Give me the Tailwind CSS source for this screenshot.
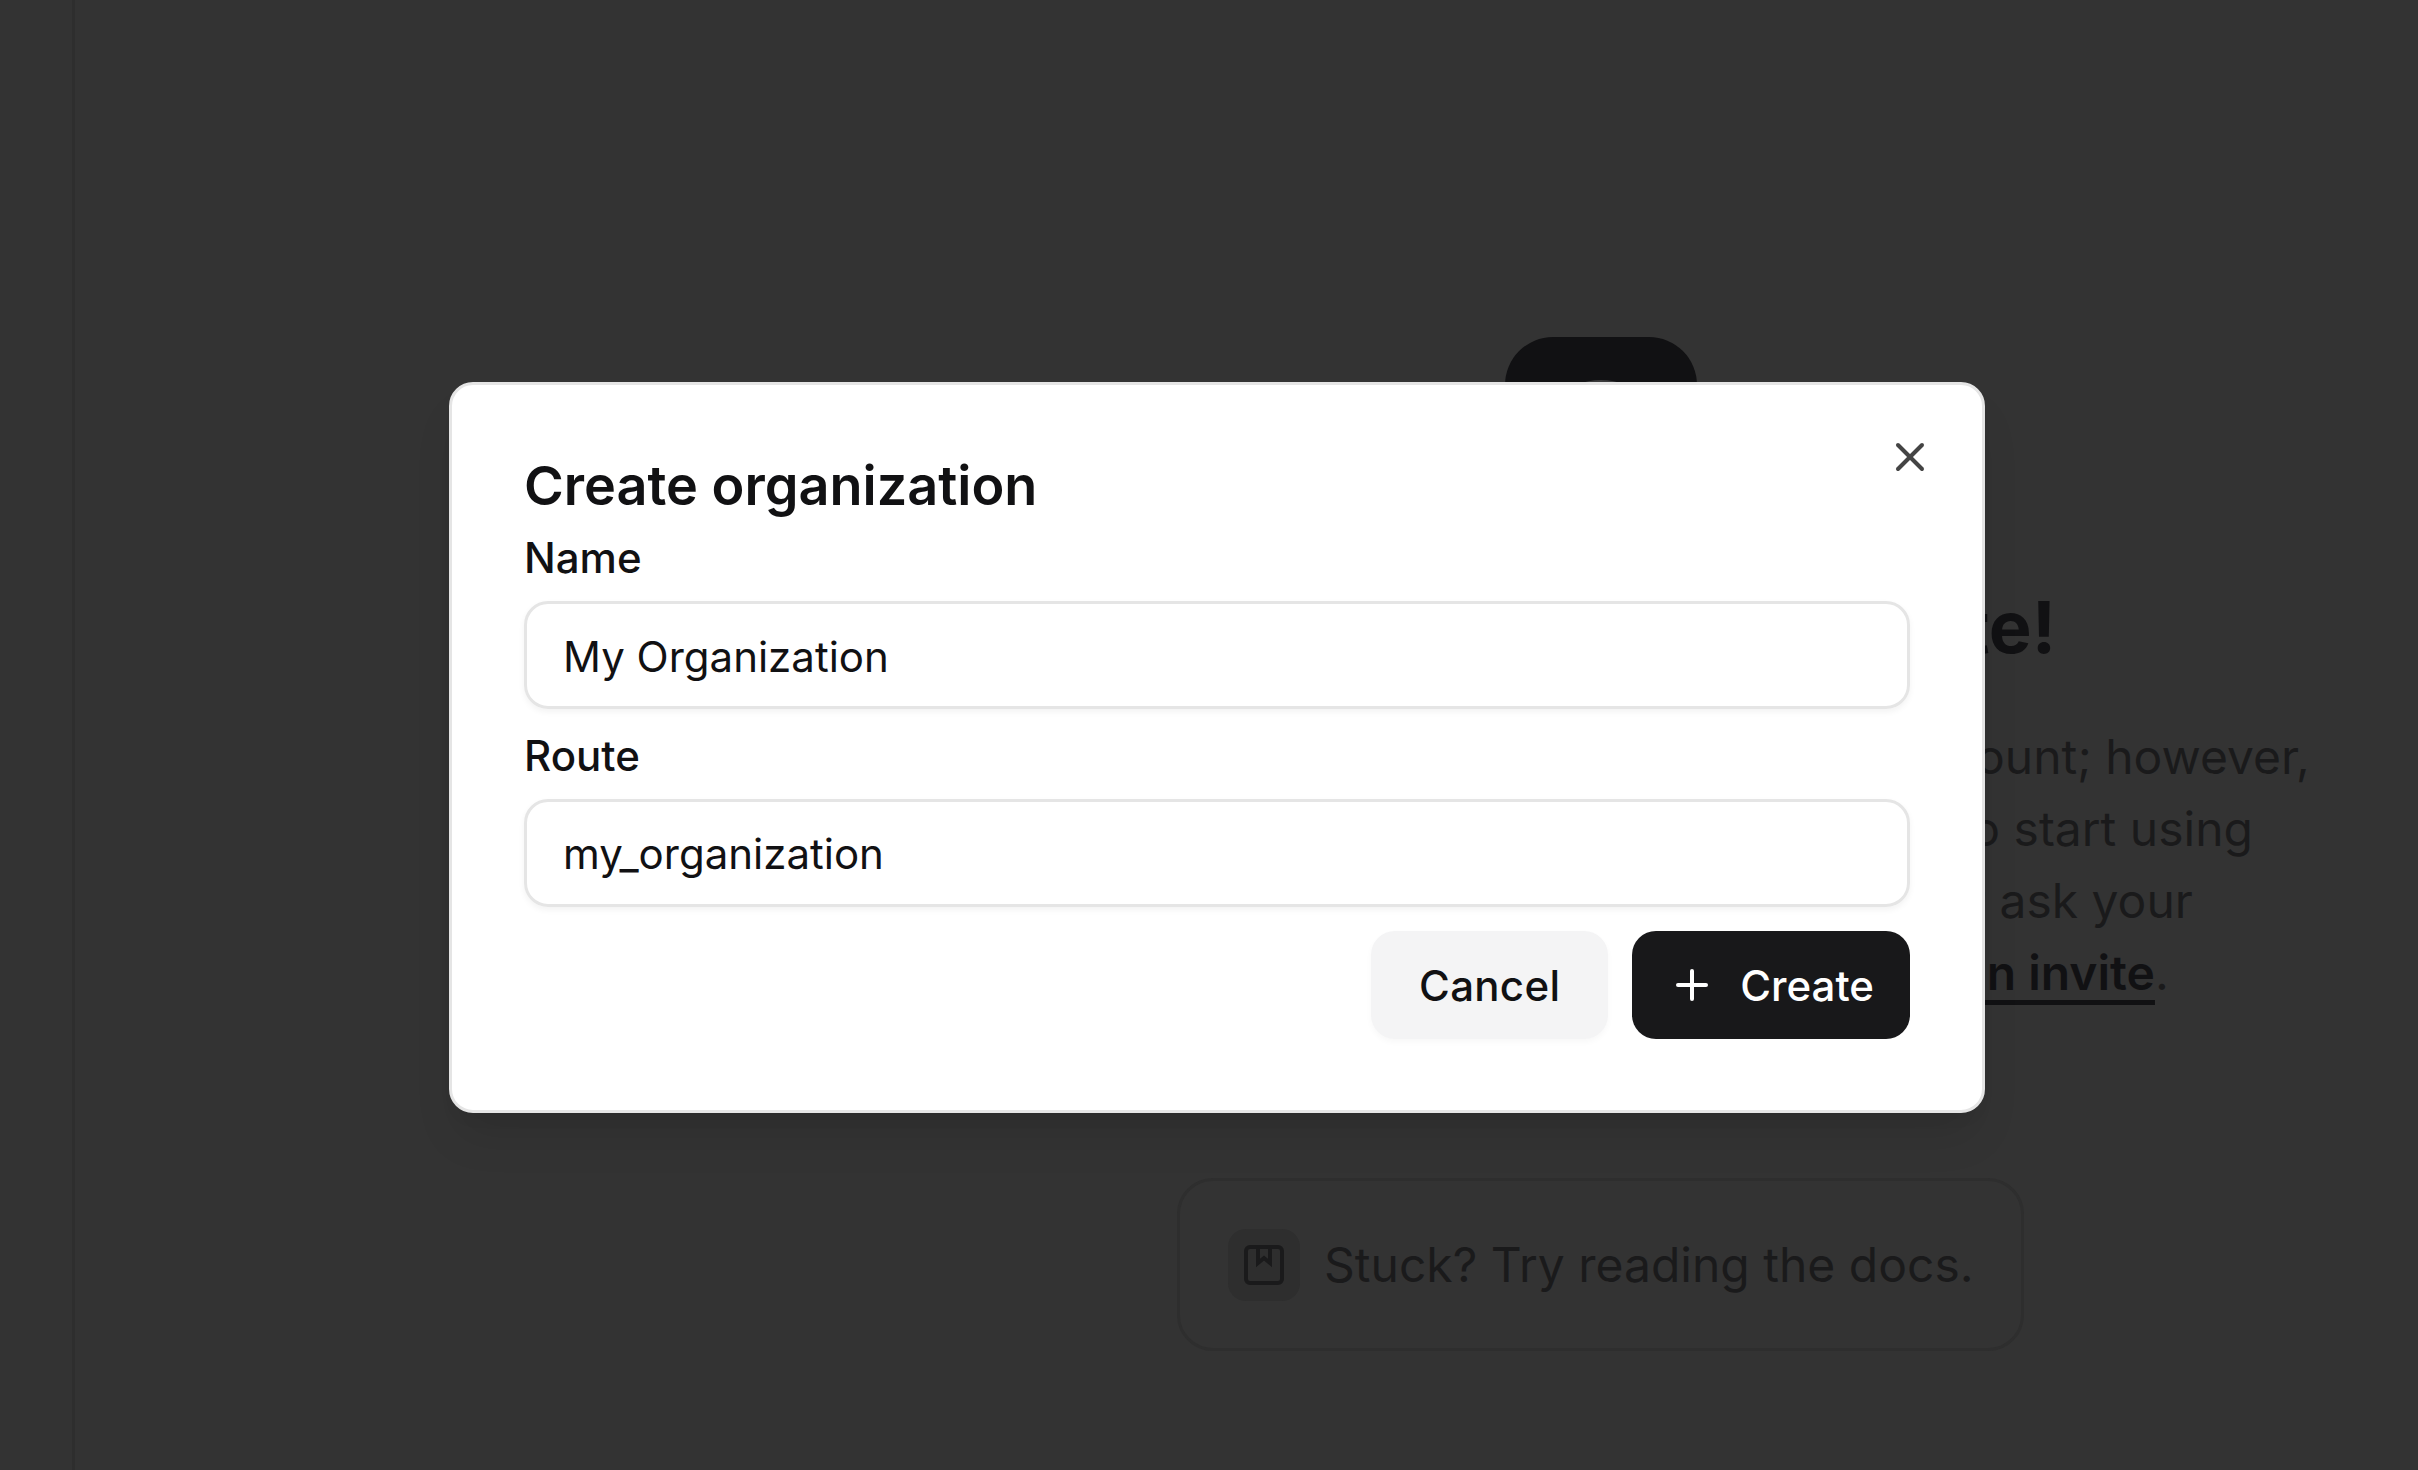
<!DOCTYPE html>
<html lang="en">
<head>
  <meta charset="UTF-8">
  <title>Create organization</title>
  <script src="https://cdn.jsdelivr.net/npm/@tailwindcss/browser@4"></script>
</head>
<body class="bg-[#333333] font-['Inter',sans-serif] overflow-hidden">
  <!-- Page behind the dialog -->
  <div class="flex h-[1470px]">
    <div class="w-[75px] shrink-0 border-r-[3px] border-[#2e2e2e]"></div>
    <div class="w-[708px] shrink-0"></div>
    <main class="flex-1 flex flex-col items-center pt-[337px]">
      <div class="w-[192px] h-[192px] rounded-[48px] bg-[#111113] flex justify-center pt-[43px]">
        <div class="w-[130px] h-[130px] rounded-full bg-[#3b3b3c]"></div>
      </div>
      <h1 class="mt-[50px] text-[72px] leading-[96px] font-bold text-[#111113] whitespace-nowrap">Welcome to your website!</h1>
      <p class="mt-[46px] text-[48px] leading-[72px] text-[#1a1a1b] text-center whitespace-nowrap">
        You have successfully registered your team account; however,<br>
        you will need to be a part of an organization to start using<br>
        this app. Create your organization online or ask your<br>
        organization's administrator to <a class="font-semibold text-[#111113] underline decoration-[5px] underline-offset-[10px]">send you an invite</a>.
      </p>
      <div class="mt-[169px] w-[847px] h-[173px] rounded-[36px] border-[3px] border-[#2e2e2e] flex items-center gap-[24px] px-[48px]">
        <div class="w-[72px] h-[72px] rounded-[18px] bg-[#2e2e2e] flex items-center justify-center shrink-0">
          <svg width="40" height="40" viewBox="0 0 40 40" fill="none" stroke="#1a1a1b" stroke-width="4">
            <rect x="2" y="2" width="36" height="36" rx="4"/>
            <path d="M14 2v16l6-5 6 5V2"/>
          </svg>
        </div>
        <span class="text-[48px] leading-[72px] text-[#1a1a1b] whitespace-nowrap">Stuck? Try reading the docs.</span>
      </div>
    </main>
  </div>

  <!-- Dialog -->
  <div class="absolute left-[449px] top-[382px] w-[1536px] flex flex-col gap-[24px] p-[72px] pb-[71px] bg-white border-[3px] border-[#e5e5e5] rounded-[24px] shadow-[0_30px_45px_-9px_rgba(0,0,0,0.1),0_12px_18px_-12px_rgba(0,0,0,0.1)] text-[#111113]">
    <button class="absolute right-[48px] top-[48px] w-[48px] h-[48px]">
      <svg width="48" height="48" viewBox="0 0 24 24" fill="none" stroke="#444444" stroke-width="2" stroke-linecap="round" stroke-linejoin="round"><path d="M18 6 6 18"/><path d="m6 6 12 12"/></svg>
    </button>
    <h2 class="h-[54px] text-[54px] leading-[57px] font-semibold">Create organization</h2>
    <label class="h-[42px] text-[42px] leading-[45px] font-medium">Name</label>
    <div class="h-[108px] border-[3px] border-[#e5e5e5] rounded-[24px] px-[36px] pt-[2px] flex items-center text-[42px] shadow-[0_3px_6px_rgba(0,0,0,0.05)]">My Organization</div>
    <label class="h-[42px] text-[42px] leading-[45px] font-medium">Route</label>
    <div class="h-[108px] border-[3px] border-[#e5e5e5] rounded-[24px] px-[36px] flex items-center text-[42px] shadow-[0_3px_6px_rgba(0,0,0,0.05)]">my_organization</div>
    <div class="flex justify-end gap-[24px]">
      <button class="h-[108px] px-[48px] rounded-[24px] bg-[#f4f4f5] text-[42px] font-medium tracking-[0.3px] shadow-[0_3px_6px_rgba(0,0,0,0.03)]">Cancel</button>
      <button class="h-[108px] px-[36px] rounded-[24px] bg-[#18181a] text-white text-[42px] font-medium flex items-center gap-[24px]">
        <svg width="48" height="48" viewBox="0 0 24 24" fill="none" stroke="currentColor" stroke-width="2" stroke-linecap="round" stroke-linejoin="round"><path d="M5 12h14"/><path d="M12 5v14"/></svg>
        Create
      </button>
    </div>
  </div>
</body>
</html>
